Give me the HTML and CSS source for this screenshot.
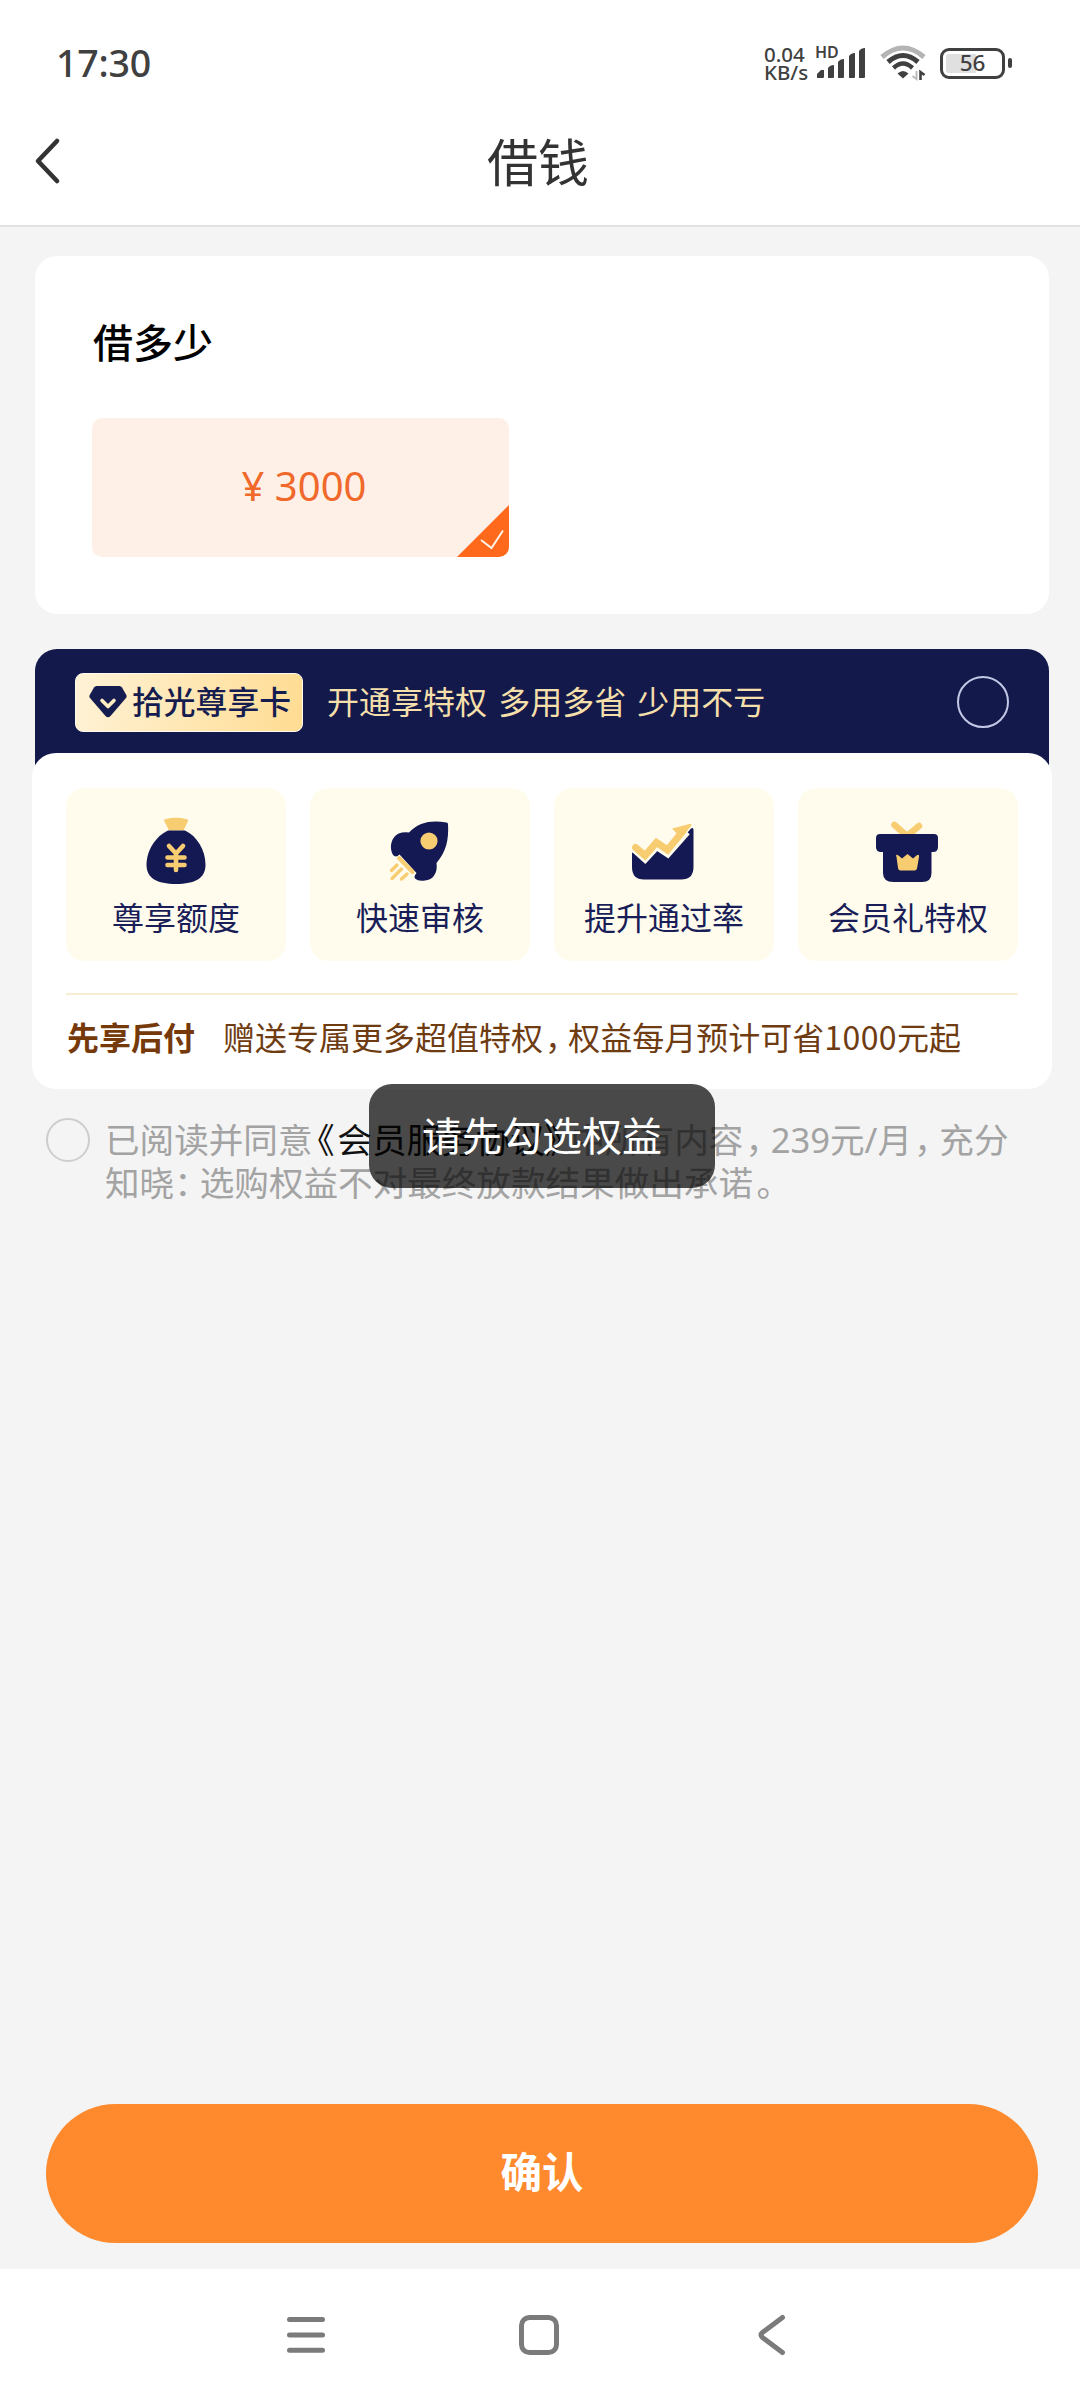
FILE: index.html
```html
<!DOCTYPE html>
<html lang="zh-CN">
<head>
<meta charset="utf-8">
<title>借钱</title>
<link rel="stylesheet" href="styles.css">
</head>
<body>
<div class="screen">
  <div class="status">
    <span class="clock">17:30</span>
    <div class="indicators">
      <div class="speed"><span>0.04</span><span>KB/s</span></div>
      <div class="signal">
        <span class="hd">HD</span>
        <svg width="49" height="32" viewBox="0 0 49 32" fill="#404040"><path d="M0 31v-4l4-4h3v7q0 1-1 1zM11 31V21q2-3 6-3v12q0 1-1 1zM21 31V15q2-3 6-3v18q0 1-1 1zM32 31V9q2-3 6-3v24q0 1-1 1zM42 31V4q2-3 6-3v29q0 1-1 1z"/></svg>
      </div>
      <svg class="wifi" width="46" height="36" viewBox="0 0 46 36" fill="none"><path d="M2 12Q23-6 44 12" stroke="#b4b4b4" stroke-width="5"/><path d="M8 17Q23 4 38 17" stroke="#404040" stroke-width="5"/><path d="M13.500 23Q23 14 32.500 23" stroke="#404040" stroke-width="4.500"/><path d="M17.500 28.500Q23 23.500 28.500 28.500L23 33.500z" fill="#404040"/><path d="M36.500 26v8l-4-3" stroke="#bbb" stroke-width="2"/><path d="M40.500 35v-8l4 3" stroke="#404040" stroke-width="2.600"/></svg>
      <div class="battery"><span class="cell">56</span><i class="cap"></i></div>
    </div>
  </div>
  <div class="navbar">
    <svg class="back" width="28" height="50" viewBox="0 0 28 50" fill="none"><path d="M23 5L4 25L23 45" stroke="#333" stroke-width="4.600" stroke-linecap="round" stroke-linejoin="round"/></svg>
    <h1>借钱</h1>
  </div>

  <div class="content">
    <section class="card amount">
      <h2>借多少</h2>
      <div class="option">
        <span>¥ 3000</span>
        <svg class="tick" width="52" height="52" viewBox="0 0 52 52"><path d="M0 52L52 0V52z" fill="#fe691b"/><path d="M24 35L34.500 43L46 25.500" fill="none" stroke="#fff3e8" stroke-width="2"/></svg>
      </div>
    </section>

    <section class="vip">
      <div class="vip-head">
        <div class="badge">
          <svg width="38" height="32" viewBox="0 0 38 32"><path d="M7.500 0H30.500Q32 0 33 1.500L37.300 9Q38 10.500 37 12L21.500 30Q19 32.500 16.500 30L1 12Q0 10.500.7 9L5 1.500Q6 0 7.500 0z" fill="#151c50"/><path d="M13 14.500L19 20.500L25 14.500" fill="none" stroke="#ffedc4" stroke-width="3.600" stroke-linecap="round" stroke-linejoin="round"/></svg>
          <span>拾光尊享卡</span>
        </div>
        <p class="slogan">开通享特权 多用多省 少用不亏</p>
        <i class="radio"></i>
      </div>
      <div class="vip-body">
        <div class="perks">
          <div class="perk">
            <svg width="64" height="70" viewBox="0 0 64 70"><path d="M20.500 5.500Q19 3.500 22 3Q32 .5 42 3Q45 3.500 43.800 5.500L39.500 14.500H25z" fill="#f8cd72"/><path d="M24 14.500H41C53 20 61.500 34 61.500 49C61.500 62 51 68 32 68S2.500 62 2.500 49C2.500 34 12 20 24 14.500z" fill="#141953"/><path d="M25 30L32 37.500L39 30M32 37V54M23.500 41.500H40.500M23.500 49H40.500" fill="none" stroke="#f8cd72" stroke-width="4.600" stroke-linecap="round"/></svg>
            <span>尊享额度</span>
          </div>
          <div class="perk">
            <svg width="64" height="70" viewBox="0 0 64 70"><path d="M58.500 6.500Q60 6.500 60 8C61 24 58 36 48.500 47C50 57 45 64 37 64.500Q30 65.500 27 62.500Q25.500 60.500 28.500 57L11.500 38.500Q8 42 5 39C0 29 5 18 14 16.500Q18 15.800 21 16.500C31 6 43 4 58.500 6.500z" fill="#141953"/><circle cx="41" cy="25" r="8.600" fill="#f8cd72"/><path d="M11 42L24.500 56" stroke="#f8cd72" stroke-width="4" stroke-linecap="round"/><path d="M9 49L3.500 54.500M13.500 53L4 62.500M19 58L13.500 63" stroke="#f8cd72" stroke-width="3.400" stroke-linecap="round"/></svg>
            <span>快速审核</span>
          </div>
          <div class="perk">
            <svg width="64" height="70" viewBox="0 0 64 70"><path d="M0 36.500L2 36.500L13 45L25 34L35 40L59 12.500Q61.500 11 61.500 14V51Q61.500 63.500 49 63.500H12Q0 63.500 0 51z" fill="#141953"/><path d="M3 32L13 41L24.500 28.500L35.500 36L54 15" fill="none" stroke="#fffcee" stroke-width="10"/><path d="M3.500 31.500L13 39.500L24.500 26.500L35.500 34L51 15" fill="none" stroke="#f8cd72" stroke-width="7" stroke-linecap="round"/><path d="M40 12.500L57.500 8Q60.500 7.500 59 10L49 22z" fill="#f8cd72"/></svg>
            <span>提升通过率</span>
          </div>
          <div class="perk">
            <svg width="64" height="70" viewBox="0 0 64 70"><path d="M18.500 9L31 20L43 10" fill="none" stroke="#f8cd72" stroke-width="6.500" stroke-linecap="round"/><path d="M4 18H58Q62 18 62 22V31Q62 36 57 36H55.500V57Q55.500 66 46 66H17.500Q7 66 7 57V36H5Q0 36 0 31V22Q0 18 4 18z" fill="#141953"/><path d="M20.500 41Q19 37.500 22.500 39.500L26 42.500L31.500 38L37 42.500L40.500 39.500Q43.500 37.500 43 41L41 52.500Q40.500 54.500 38.500 54.500H24.500Q22.500 54.500 22.100 52.500z" fill="#f8cd72"/></svg>
            <span>会员礼特权</span>
          </div>
        </div>
        <div class="promo"><strong>先享后付</strong><span>赠送专属更多超值特权<i class="pm">，</i>权益每月预计可省<span class="thousand">1000</span>元起</span></div>
      </div>
    </section>

    <div class="agree">
      <i class="radio"></i>
      <p>已阅读并同意<a><i class="po">《</i>会员服务协议<i class="pc">》</i></a>中所有内容<i class="pm">，</i><span class="num">239</span>元<span class="num">/</span>月<i class="pm">，</i>充分<br>知晓<i class="pc">：</i>选购权益不对最终放款结果做出承诺<i class="stop">。</i></p>
    </div>
  </div>

  <button class="confirm">确认</button>

  <div class="sysnav">
    <svg width="42" height="42" viewBox="0 0 42 42"><path d="M4.500 5.500H37.500M4.500 21H37.500M4.500 36.300H37.500" stroke="#7b7b7b" stroke-width="5" stroke-linecap="round"/></svg>
    <svg width="42" height="42" viewBox="0 0 42 42"><rect x="3.500" y="3.500" width="35" height="35" rx="8" fill="none" stroke="#7b7b7b" stroke-width="5"/></svg>
    <svg width="42" height="42" viewBox="0 0 42 42"><path d="M31.500 3.500L11.500 18.500Q8.500 21 11.500 23.500L31.500 38.500" fill="none" stroke="#7b7b7b" stroke-width="5" stroke-linecap="round"/></svg>
  </div>
  <div class="toast">请先勾选权益</div>
</div>
</body>
</html>
```
FILE: styles.css
```css
* { box-sizing: border-box; }
body, h1, h2, p { margin: 0; }
i { font-style: normal; }
svg { display: block; flex: none; }
body {
  font-family: "Noto Sans CJK SC", sans-serif;
  background: #f4f4f4;
  line-height: 1;
}
.screen {
  position: relative;
  display: flex;
  flex-direction: column;
  width: 1080px;
  height: 2400px;
  overflow: hidden;
  background: #f4f4f4;
}

/* Status bar */
.status {
  display: flex;
  justify-content: space-between;
  align-items: center;
  height: 126px;
  padding: 0 68px 0 56px;
  background: #fff;
  color: #404040;
}
.clock {
  font: 500 37.500px/1 "Noto Sans", sans-serif;
  letter-spacing: -0.2px;
}
.indicators { display: flex; align-items: center; }
.speed {
  display: flex;
  flex-direction: column;
  width: 50px;
  font: 500 20.500px/18px "Noto Sans", sans-serif;
}
.signal { position: relative; margin-right: 14px; margin-left: 3px; padding-bottom: 1px; }
.hd {
  position: absolute;
  top: -2px;
  left: -2px;
  font: 600 16px/15px "Noto Sans", sans-serif;
}
.wifi { margin-right: 14px; }
.battery { display: flex; align-items: center; gap: 3px; }
.cell {
  width: 65px;
  height: 31px;
  border: 3px solid #404040;
  border-radius: 9px;
  background: linear-gradient(90deg, #e0e0e0 56%, #fff 56%) content-box;
  padding: 3px;
  font: 500 22.500px/18px "Noto Sans", sans-serif;
  text-align: center;
}
.cap { width: 4px; height: 10px; border-radius: 2px; background: #404040; }

/* Title bar */
.navbar {
  position: relative;
  display: flex;
  justify-content: center;
  height: 101px;
  padding-top: 6px;
  border-bottom: 2px solid #e0e1e0;
  background: #fff;
  color: #333;
}
.back { position: absolute; left: 34px; top: 10px; }
h1 { font-size: 51px; line-height: 56px; font-weight: 400; margin-right: 4px; }

.content { flex: 1; padding-top: 29px; }

/* Loan amount */
.amount {
  width: 1014px;
  height: 358px;
  margin-left: 35px;
  padding: 62px 57px 0;
  border-radius: 22px;
  background: #fff;
}
h2 { font-size: 40px; line-height: 46px; font-weight: 500; color: #000; padding-left: 1px; }
.option {
  position: relative;
  display: flex;
  align-items: center;
  justify-content: center;
  width: 417px;
  height: 139px;
  margin-top: 54px;
  border-radius: 10px;
  overflow: hidden;
  background: #fff0e7;
  color: #f0692a;
  font: 400 40px/1 "Noto Sans", sans-serif;
  padding: 0 0 4px 7px;
}
.tick { position: absolute; right: 0; bottom: 0; }

/* Membership */
.vip { margin-top: 35px; }
.vip-head {
  display: flex;
  align-items: center;
  width: 1014px;
  height: 126px;
  margin: 0 0 -22px 35px;
  padding: 2px 40px 22px;
  border-radius: 22px 22px 0 0;
  background: #131a4b;
}
.badge {
  display: flex;
  align-items: center;
  gap: 5px;
  width: 228px;
  height: 59px;
  padding-left: 13px;
  border: 1px solid #fffaf0;
  border-radius: 8px;
  background: linear-gradient(100deg, #fff2d6, #ffdc92);
  color: #151c50;
  font-size: 31.800px;
  font-weight: 500;
}
.badge span { padding-bottom: 3px; }
.slogan { margin-left: 24px; padding-bottom: 4px; font-size: 32px; word-spacing: 4px; color: #f5dfaa; flex: 1; }
.radio { flex: none; border-radius: 50%; border: 2px solid #c3c8e6; width: 52px; height: 52px; }
.vip-body {
  position: relative;
  width: 1020px;
  height: 336px;
  margin-left: 32px;
  padding: 35px 34px 0;
  border-radius: 24px;
  background: #fff;
}
.perks { display: grid; grid-template-columns: repeat(4, 220px); gap: 24px; }
.perk {
  display: flex;
  flex-direction: column;
  align-items: center;
  height: 173px;
  padding-top: 28px;
  border-radius: 18px;
  background: #fffcee;
  color: #1a1e58;
  font-size: 32px;
}
.perk span { margin-top: 14px; white-space: nowrap; }
.promo {
  display: flex;
  gap: 28px;
  margin-top: 32px;
  padding: 25px 0 0 1px;
  border-top: 2px solid #f8edd2;
  color: #6f3c12;
  font-size: 32px;
  white-space: nowrap;
}
.promo strong { font-weight: 700; color: #75390a; }
.thousand { letter-spacing: .4px; }
/* Condensed full-width punctuation */
.pc { margin-right: -.26em; }
.po { margin-left: -.36em; margin-right: .08em; }
.pm { margin-left: .06em; margin-right: -.27em; }
.stop { margin-left: .1em; }

/* Agreement */
.agree { display: flex; margin: 29px 0 0 46px; }
.agree .radio { width: 44px; height: 44px; border-color: #cdcdcd; }
.agree p {
  margin: -1px 0 0 15px;
  font-size: 34.600px;
  line-height: 43px;
  color: #a3a3a3;
  white-space: nowrap;
}
.agree a { color: #111; }
.num { font-family: "Noto Sans", sans-serif; line-height: 1; }

.confirm {
  width: 992px;
  height: 139px;
  margin: 0 0 26px 46px;
  padding: 0 0 5px;
  border: 0;
  border-radius: 70px;
  background: #ff8a2e;
  color: #fff;
  font: 700 41.500px/1 "Noto Sans CJK SC", sans-serif;
}
.sysnav {
  display: flex;
  justify-content: center;
  gap: 191px;
  height: 131px;
  padding: 45px 2px 0 0;
  background: #fff;
}
.toast {
  position: absolute;
  left: 369px;
  top: 1084px;
  width: 346px;
  height: 104px;
  border-radius: 23px;
  background: rgba(0, 0, 0, .7);
  color: #fff;
  font-size: 40px;
  line-height: 100px;
  text-align: center;
}
```
